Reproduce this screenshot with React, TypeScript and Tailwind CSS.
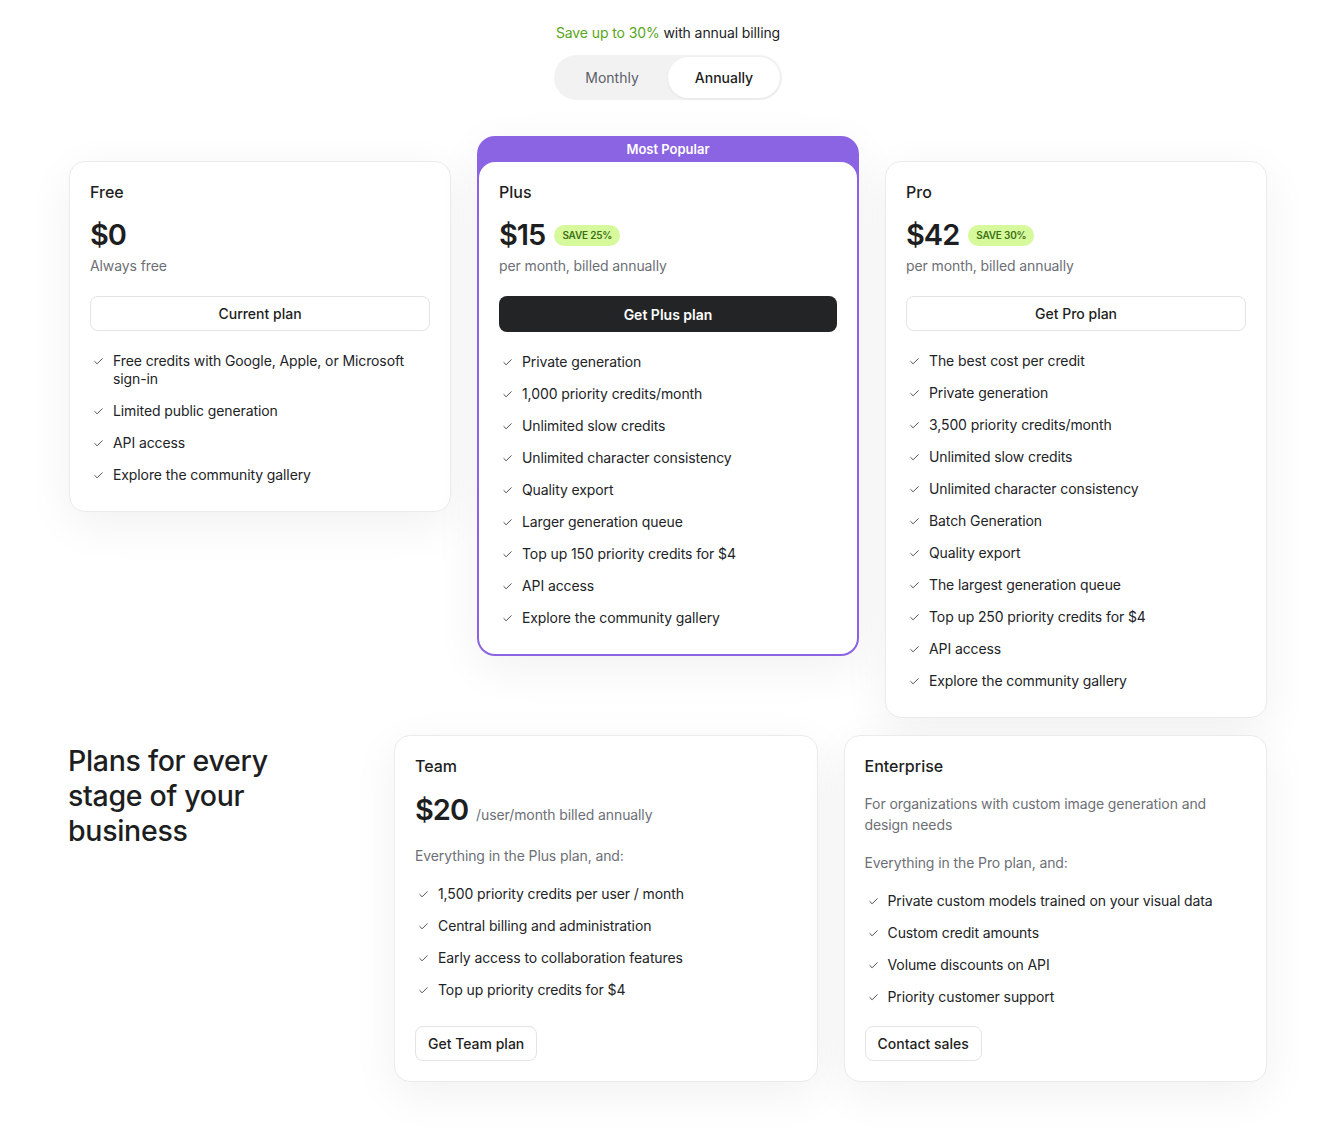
import React from "react";
import {Check} from "lucide-react";

type Plan = {
  name: string;
  price: string;
  save?: string;
  note: string;
  cta: string;
  primary?: boolean;
  features: string[];
};

const plans: Plan[] = [
  {
    name: "Free",
    price: "$0",
    note: "Always free",
    cta: "Current plan",
    features: [
      "Free credits with Google, Apple, or Microsoft sign-in",
      "Limited public generation",
      "API access",
      "Explore the community gallery",
    ],
  },
  {
    name: "Plus",
    price: "$15",
    save: "Save 25%",
    note: "per month, billed annually",
    cta: "Get Plus plan",
    primary: true,
    features: [
      "Private generation",
      "1,000 priority credits/month",
      "Unlimited slow credits",
      "Unlimited character consistency",
      "Quality export",
      "Larger generation queue",
      "Top up 150 priority credits for $4",
      "API access",
      "Explore the community gallery",
    ],
  },
  {
    name: "Pro",
    price: "$42",
    save: "Save 30%",
    note: "per month, billed annually",
    cta: "Get Pro plan",
    features: [
      "The best cost per credit",
      "Private generation",
      "3,500 priority credits/month",
      "Unlimited slow credits",
      "Unlimited character consistency",
      "Batch Generation",
      "Quality export",
      "The largest generation queue",
      "Top up 250 priority credits for $4",
      "API access",
      "Explore the community gallery",
    ],
  },
];

const teamFeatures = [
  "1,500 priority credits per user / month",
  "Central billing and administration",
  "Early access to collaboration features",
  "Top up priority credits for $4",
];

const enterpriseFeatures = [
  "Private custom models trained on your visual data",
  "Custom credit amounts",
  "Volume discounts on API",
  "Priority customer support",
];

const cardShadow = "shadow-[0_12px_48px_rgba(0,0,0,0.06)]";

const FeatureList = ({items}: {items: string[]}) => (
  <ul className="flex flex-col gap-[14px]">
    {items.map((item) => (
      <li
        key={item}
        className="flex items-start text-[14px] leading-[18px] tracking-[-0.1px] text-[#222326]"
      >
        <Check size={11} strokeWidth={1.8} className="mt-[4px] ml-[3px] mr-[9px] shrink-0 text-[#2a2b2e]" />
        <span>{item}</span>
      </li>
    ))}
  </ul>
);

const SaveBadge = ({label}: {label: string}) => (
  <span className="ml-[9px] rounded-full bg-[#d6f99c] px-[8px] py-[4px] text-[10px] font-semibold uppercase leading-[13px] tracking-[-0.2px] text-[#3d7014]">
    {label}
  </span>
);

const PlanBody = ({plan}: {plan: Plan}) => (
  <div className="px-5 pt-[20px] pb-[27px]">
    <h3 className="text-[16px] font-medium leading-[20px] text-[#1d1e21]">{plan.name}</h3>
    <div className="mt-[16px] flex items-center">
      <span className="text-[29px] font-semibold leading-[34px] tracking-[-1px] text-[#1d1e21]">
        {plan.price}
      </span>
      {plan.save && <SaveBadge label={plan.save} />}
    </div>
    <p className="mt-[5px] text-[14px] leading-[18px] tracking-[-0.1px] text-[#6d6f76]">{plan.note}</p>
    <button
      className={
        plan.primary
          ? "mt-[21px] h-[36px] w-full rounded-lg bg-[#232426] text-[14px] font-semibold text-white"
          : "mt-[21px] h-[35px] w-full rounded-lg border border-[#e3e4e6] bg-white text-[14px] font-medium text-[#1d1e21]"
      }
    >
      {plan.cta}
    </button>
    <div className="mt-[21px]">
      <FeatureList items={plan.features} />
    </div>
  </div>
);

const PlanCard = ({plan}: {plan: Plan}) => {
  if (plan.primary) {
    return (
      <div className={`-mt-[25px] rounded-[18px] bg-[#8b64e4] px-[2px] pb-[2px] ${cardShadow}`}>
        <div className="flex h-[26px] items-center justify-center pt-[1px] text-[13px] font-semibold text-white">
          Most Popular
        </div>
        <div className="rounded-[16px] bg-white">
          <PlanBody plan={plan} />
        </div>
      </div>
    );
  }
  return (
    <div className={`rounded-[16px] border border-[#ebebed] bg-white ${cardShadow}`}>
      <PlanBody plan={plan} />
    </div>
  );
};

export default function App() {
  return (
    <div
      className="min-h-screen bg-white pl-[68px] pr-[76px] pt-[24px] pb-[45px]"
      style={{fontFamily: "Inter, 'Noto Sans', sans-serif"}}
    >
      {/* billing toggle */}
      <div className="flex flex-col items-center">
        <p className="text-[14px] leading-[18px] tracking-[-0.1px] text-[#222326]">
          <span className="text-[#5aa519]">Save up to 30%</span> with annual billing
        </p>
        <div className="mt-[13px] flex h-[45px] items-center rounded-full bg-[#f2f2f3] p-[2px]">
          <button className="h-[41px] w-[112px] rounded-full text-[14px] text-[#5c5f66]">Monthly</button>
          <button className="h-[41px] w-[112px] rounded-full bg-white text-[14px] font-medium text-[#1d1e21] shadow-[0_1px_3px_rgba(0,0,0,0.06)]">
            Annually
          </button>
        </div>
      </div>

      {/* plan cards */}
      <div className="mt-[61px] grid grid-cols-3 items-start gap-[26px] px-[1px]">
        {plans.map((plan) => (
          <PlanCard key={plan.name} plan={plan} />
        ))}
      </div>

      {/* team + enterprise */}
      <div className="mt-[17px] grid grid-cols-[300px_1fr_1fr] gap-[26px] pr-[1px]">
        <h2 className="pt-[8px] text-[28.5px] font-medium leading-[35px] tracking-[-0.3px] text-[#1d1e21]">
          Plans for every
          <br />
          stage of your
          <br />
          business
        </h2>

        <div className={`flex flex-col items-start rounded-[16px] border border-[#ebebed] bg-white px-5 pt-[20px] pb-[20px] ${cardShadow}`}>
          <h3 className="text-[16px] font-medium leading-[20px] text-[#1d1e21]">Team</h3>
          <div className="mt-[17px] flex items-baseline">
            <span className="text-[29px] font-semibold leading-[34px] tracking-[-1px] text-[#1d1e21]">$20</span>
            <span className="ml-[8px] text-[14px] tracking-[-0.1px] text-[#6d6f76]">/user/month billed annually</span>
          </div>
          <p className="mt-[20px] text-[14px] leading-[18px] tracking-[-0.1px] text-[#6d6f76]">
            Everything in the Plus plan, and:
          </p>
          <div className="mt-[20px]">
            <FeatureList items={teamFeatures} />
          </div>
          <button className="mt-auto h-[35px] rounded-lg border border-[#e3e4e6] bg-white px-3 text-[14px] font-medium text-[#1d1e21]">
            Get Team plan
          </button>
        </div>

        <div className={`flex flex-col items-start rounded-[16px] border border-[#ebebed] bg-white px-5 pt-[20px] pb-[20px] ${cardShadow}`}>
          <h3 className="text-[16px] font-medium leading-[20px] text-[#1d1e21]">Enterprise</h3>
          <p className="mt-[17px] max-w-[372px] text-[14px] leading-[21px] tracking-[-0.1px] text-[#6d6f76]">
            For organizations with custom image generation and design needs
          </p>
          <p className="mt-[19px] text-[14px] leading-[18px] tracking-[-0.1px] text-[#6d6f76]">
            Everything in the Pro plan, and:
          </p>
          <div className="mt-[20px]">
            <FeatureList items={enterpriseFeatures} />
          </div>
          <button className="mt-[20px] h-[35px] rounded-lg border border-[#e3e4e6] bg-white px-3 text-[14px] font-medium text-[#1d1e21]">
            Contact sales
          </button>
        </div>
      </div>
    </div>
  );
}
